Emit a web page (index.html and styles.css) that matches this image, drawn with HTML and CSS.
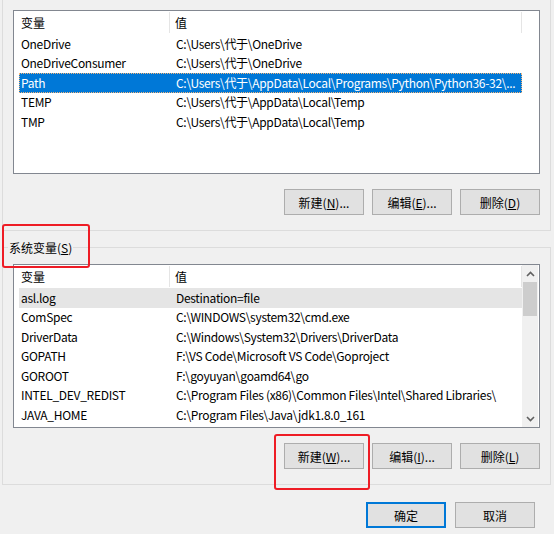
FILE: index.html
```html
<!DOCTYPE html>
<html lang="zh-CN">
<head>
    <meta charset="UTF-8">
    <title>环境变量</title>
    <link rel="stylesheet" href="styles.css">
</head>
<body>
    <div class="dialog">
        <div class="group group-user">
            <div class="listview">
                <div class="list-body">
                    <div class="list-header">
                        <div class="cell col-name">变量</div>
                        <div class="cell col-value">值</div>
                    </div>
                    <div class="row"><div class="cell col-name">OneDrive</div><div class="cell col-value">C:\Users\代于\OneDrive</div></div>
                    <div class="row"><div class="cell col-name">OneDriveConsumer</div><div class="cell col-value">C:\Users\代于\OneDrive</div></div>
                    <div class="row selected"><div class="cell col-name">Path</div><div class="cell col-value">C:\Users\代于\AppData\Local\Programs\Python\Python36-32\...</div></div>
                    <div class="row"><div class="cell col-name">TEMP</div><div class="cell col-value">C:\Users\代于\AppData\Local\Temp</div></div>
                    <div class="row"><div class="cell col-name">TMP</div><div class="cell col-value">C:\Users\代于\AppData\Local\Temp</div></div>
                </div>
                <div class="list-blank"></div>
            </div>
            <div class="buttons">
                <button>新建(<u>N</u>)...</button>
                <button>编辑(<u>E</u>)...</button>
                <button>删除(<u>D</u>)</button>
            </div>
        </div>

        <fieldset class="group group-system">
            <legend>系统变量(<u>S</u>)</legend>
            <div class="listview">
                <div class="list-body">
                    <div class="list-header">
                        <div class="cell col-name">变量</div>
                        <div class="cell col-value">值</div>
                    </div>
                    <div class="row hover"><div class="cell col-name">asl.log</div><div class="cell col-value">Destination=file</div></div>
                    <div class="row"><div class="cell col-name">ComSpec</div><div class="cell col-value">C:\WINDOWS\system32\cmd.exe</div></div>
                    <div class="row"><div class="cell col-name">DriverData</div><div class="cell col-value">C:\Windows\System32\Drivers\DriverData</div></div>
                    <div class="row"><div class="cell col-name">GOPATH</div><div class="cell col-value">F:\VS Code\Microsoft VS Code\Goproject</div></div>
                    <div class="row"><div class="cell col-name">GOROOT</div><div class="cell col-value">F:\goyuyan\goamd64\go</div></div>
                    <div class="row"><div class="cell col-name">INTEL_DEV_REDIST</div><div class="cell col-value">C:\Program Files (x86)\Common Files\Intel\Shared Libraries\</div></div>
                    <div class="row"><div class="cell col-name">JAVA_HOME</div><div class="cell col-value">C:\Program Files\Java\jdk1.8.0_161</div></div>
                </div>
                <div class="scrollbar">
                    <div class="arrow"><svg width="9" height="6" viewBox="0 0 9 6"><polyline points="1,5 4.5,1.5 8,5" fill="none" stroke="#606060" stroke-width="1.6"/></svg></div>
                    <div class="thumb"></div>
                    <div class="track"></div>
                    <div class="arrow"><svg width="9" height="6" viewBox="0 0 9 6"><polyline points="1,1 4.5,4.5 8,1" fill="none" stroke="#606060" stroke-width="1.6"/></svg></div>
                </div>
            </div>
            <div class="buttons">
                <button>新建(<u>W</u>)...</button>
                <button>编辑(<u>I</u>)...</button>
                <button>删除(<u>L</u>)</button>
            </div>
        </fieldset>

        <div class="buttons dialog-buttons">
            <button class="default">确定</button>
            <button>取消</button>
        </div>

        <!-- annotation marks -->
        <div class="mark mark-label"></div>
        <div class="mark mark-new"></div>
    </div>
</body>
</html>
```

FILE: styles.css
```css
body {
    margin: 0;
    background-color: #f0f0f0;
    font-family: "Noto Sans CJK SC", "Noto Sans", sans-serif;
    font-size: 12px;
    color: #000;
}
.dialog {
    position: relative;
    width: 554px;
    height: 534px;
    overflow: hidden;
}
.group {
    margin: 0 3px 0 2px;
    border: 1px solid #dcdcdc;
    padding: 0 10px 15px 10px;
}
.group-user {
    border-top: none;
    padding-top: 10px;
}
.group-system {
    margin-top: 8px;
    padding-top: 0;
    min-width: 0;
}
.group-system legend {
    margin-left: -5px;
    padding: 0 1px;
    line-height: 16px;
    color: #000;
    position: relative;
    top: 1px;
}
.group-system .listview {
    margin-top: 9px;
}
.listview {
    display: flex;
    height: 164px;
    box-sizing: border-box;
    border: 1px solid #828790;
    background: white;
}
.list-body {
    width: 508px;
    padding-left: 5px;
    box-sizing: border-box;
}
.list-blank {
    flex: 1;
}
.list-header {
    display: flex;
    height: 23px;
    align-items: center;
}
.list-header .col-name {
    border-right: 1px solid #e5e5e5;
    height: 21px;
    display: flex;
    align-items: center;
}
.list-header .col-value {
    flex: 1;
    border-right: 1px solid #e5e5e5;
    height: 21px;
    display: flex;
    align-items: center;
}
.row {
    display: flex;
    height: 19.5px;
    align-items: center;
    white-space: nowrap;
    letter-spacing: -0.3px;
}
.row.selected {
    background-color: #0078d7;
    color: white;
    outline: 1px dotted #f3b57a;
    outline-offset: -1px;
}
.row.hover {
    background-color: #e5e5e5;
}
.cell {
    line-height: 16px;
    white-space: nowrap;
    overflow: hidden;
}
.col-name {
    width: 151px;
    padding-left: 2px;
    box-sizing: border-box;
    flex-shrink: 0;
}
.row .col-name {
    width: 152px;
}
.col-value {
    padding-left: 5px;
}
.row .col-value {
    flex: 1;
    min-width: 0;
    padding-left: 5px;
    text-overflow: ellipsis;
}
.scrollbar {
    width: 16px;
    display: flex;
    flex-direction: column;
    background: #f0f0f0;
}
.scrollbar .arrow {
    height: 17px;
    display: flex;
    align-items: center;
    justify-content: center;
}
.scrollbar .thumb {
    height: 34px;
    margin: 0 1px 0 1px;
    background: #cdcdcd;
}
.scrollbar .track {
    flex: 1;
}
.buttons {
    display: flex;
    justify-content: flex-end;
    gap: 8px;
    margin-top: 15px;
}
.buttons button {
    width: 80px;
    height: 26px;
    padding: 0;
    font-family: inherit;
    font-size: 12px;
    color: #000;
    background-color: #e1e1e1;
    border: 1px solid #adadad;
}
.dialog-buttons {
    margin-top: 17px;
    margin-right: 19px;
    gap: 9px;
}
.dialog-buttons button {
    height: 26px;
}
.dialog-buttons button.default {
    border: 2px solid #0078d7;
}
.mark {
    position: absolute;
    border: 2px solid #ee1c25;
    border-radius: 3px;
    box-sizing: border-box;
}
.mark-label {
    left: 2px;
    top: 224px;
    width: 88px;
    height: 44px;
}
.mark-new {
    left: 274px;
    top: 434px;
    width: 96px;
    height: 56px;
}
```
